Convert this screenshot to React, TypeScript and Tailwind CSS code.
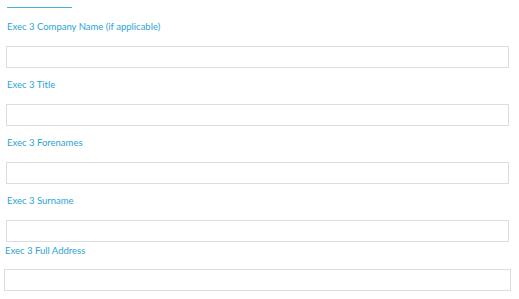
const fields = [
  { label: 'Exec 3 Company Name (if applicable)' },
  { label: 'Exec 3 Title' },
  { label: 'Exec 3 Forenames' },
  { label: 'Exec 3 Surname' },
];

export default function App(): JSX.Element {
  return (
    <div className="w-[519px] h-[299px] bg-white overflow-hidden font-['Lato',sans-serif]">
      <div className="pl-[7px] pt-[7px]">
        <div className="w-[65px] h-px bg-[#3fb3e2]" />
      </div>

      <div className="flex flex-col pl-[6px] pr-[10px] pt-[12px]">
        {fields.map((f) => (
          <Field key={f.label} label={f.label} />
        ))}
      </div>

      <div className="flex flex-col pl-[4px] pr-[8px] -mt-[8px]">
        <label className="pl-px text-[9.5px] leading-[14px] text-[#2ba4d6]">Exec 3 Full Address</label>
        <input className="mt-[11px] h-[22px] w-full border border-[#dddddd] outline-none" />
      </div>
    </div>
  );
}

function Field({ label }: { label: string }): JSX.Element {
  return (
    <div className="flex flex-col pb-[10px]">
      <label className="pl-px text-[9.5px] leading-[14px] text-[#2ba4d6]">{label}</label>
      <input className="mt-[12px] h-[22px] w-full border border-[#dddddd] outline-none" />
    </div>
  );
}
